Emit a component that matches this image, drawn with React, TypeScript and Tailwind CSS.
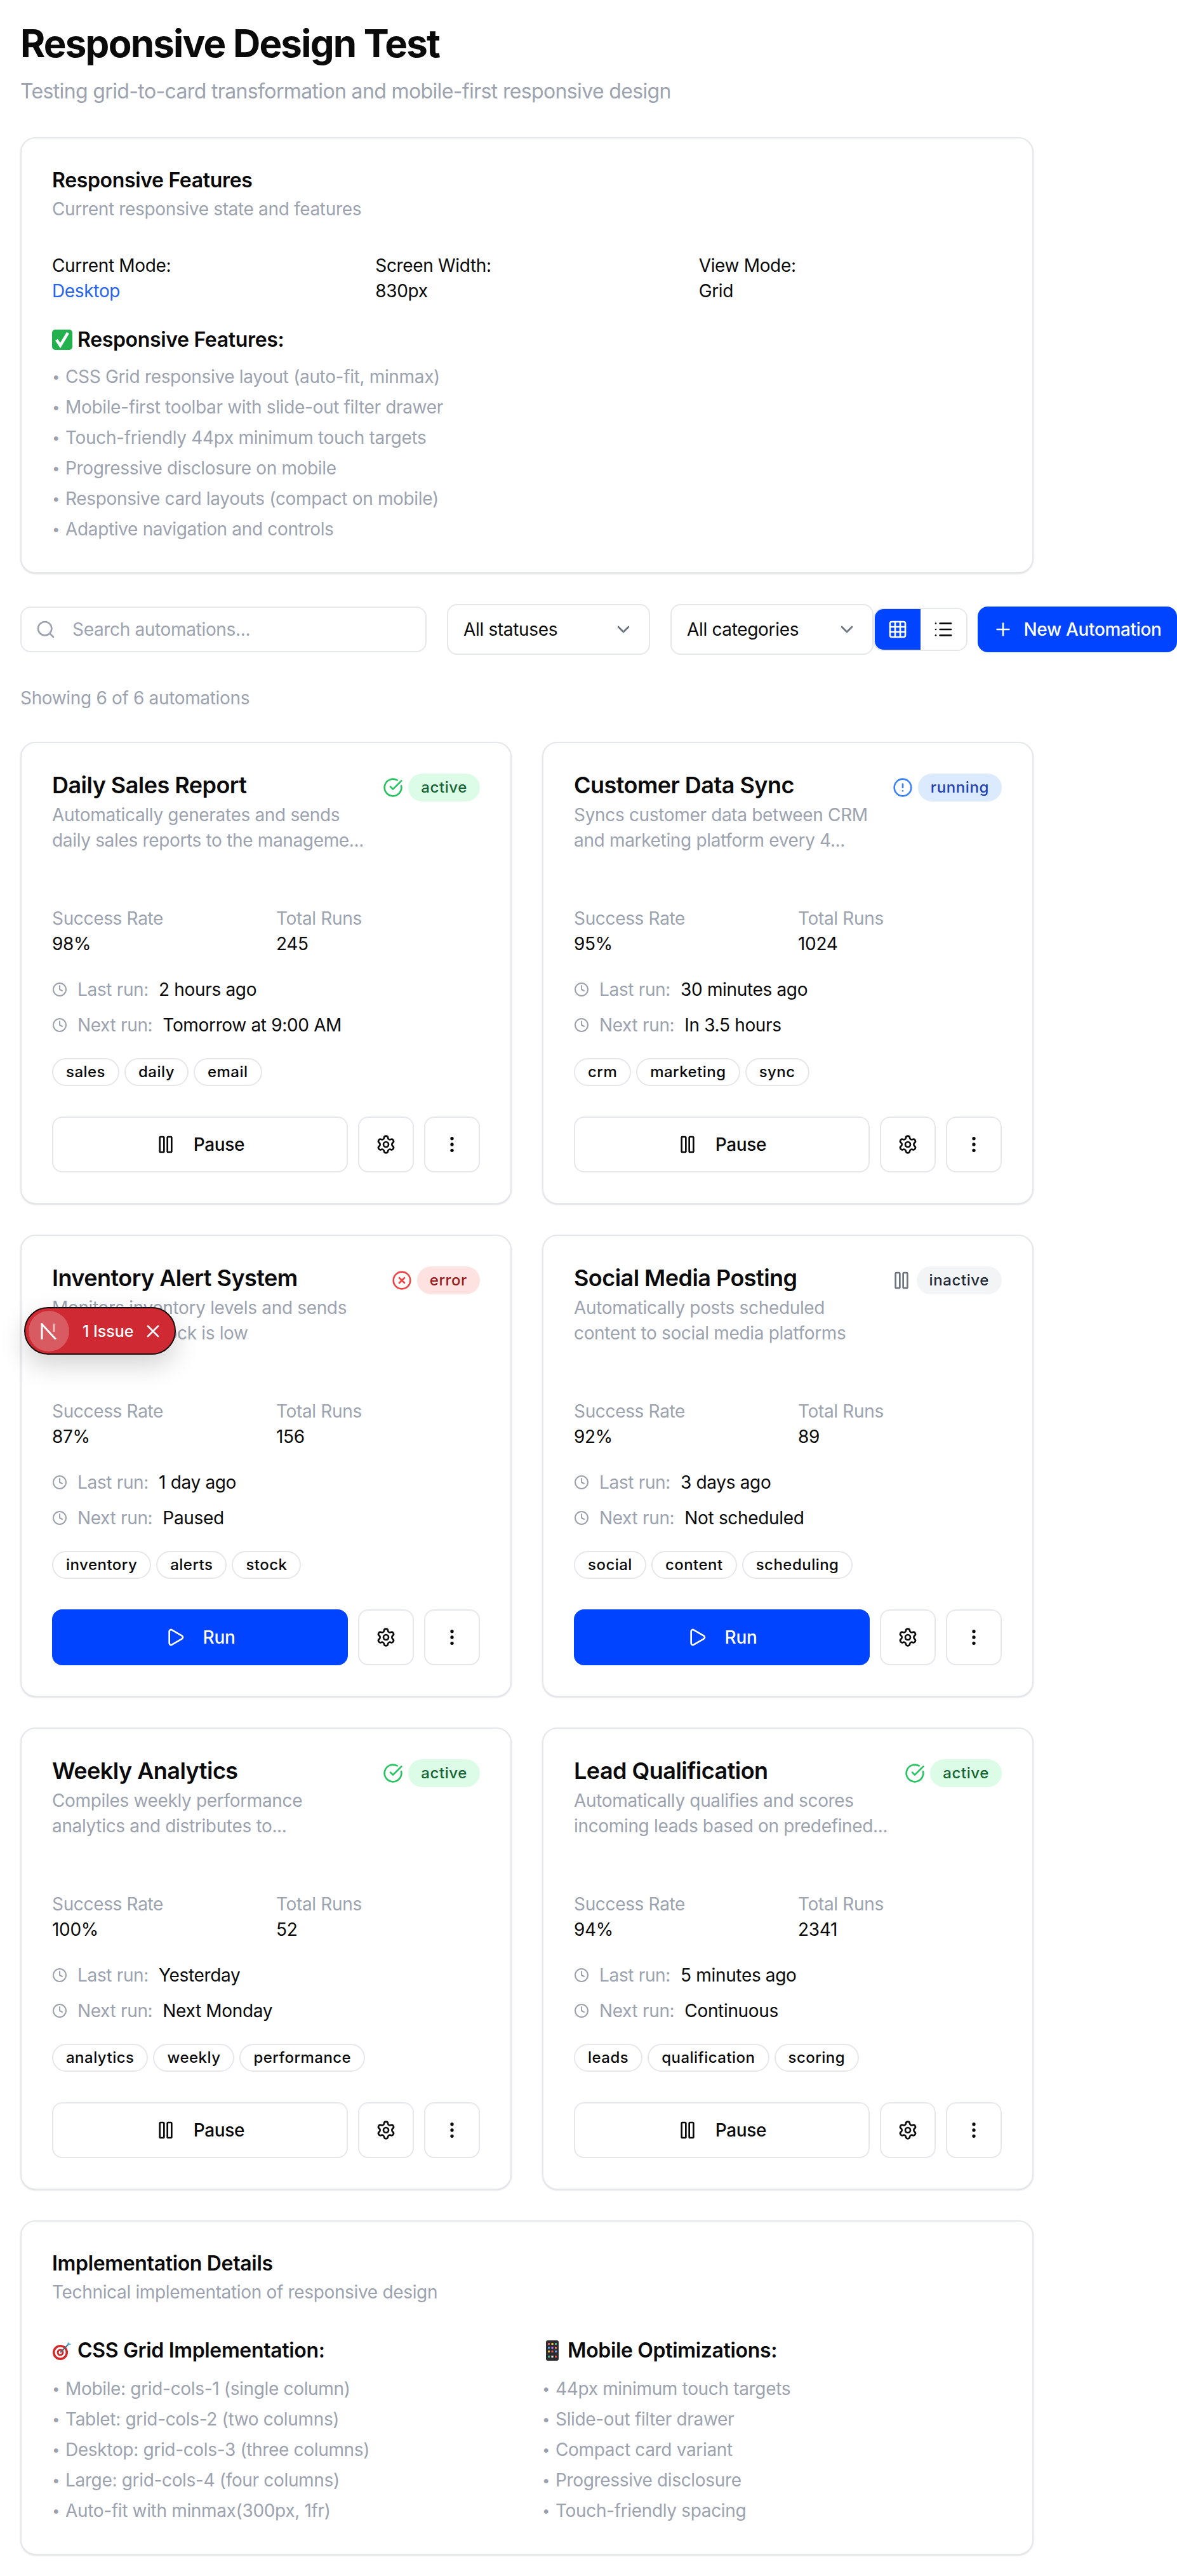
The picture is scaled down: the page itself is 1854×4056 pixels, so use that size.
import {
  ChevronDown,
  CircleAlert,
  CircleCheckBig,
  CircleX,
  Clock,
  EllipsisVertical,
  Grid3x3,
  List,
  Pause,
  Play,
  Plus,
  Search,
  Settings,
  X,
} from 'lucide-react'

const AUTOMATIONS = [
  { name: 'Daily Sales Report', lines: ['Automatically generates and sends', 'daily sales reports to the manageme...'], status: 'active', rate: '98%', runs: '245', last: '2 hours ago', next: 'Tomorrow at 9:00 AM', tags: ['sales', 'daily', 'email'] },
  { name: 'Customer Data Sync', lines: ['Syncs customer data between CRM', 'and marketing platform every 4...'], status: 'running', rate: '95%', runs: '1024', last: '30 minutes ago', next: 'In 3.5 hours', tags: ['crm', 'marketing', 'sync'] },
  { name: 'Inventory Alert System', lines: ['Monitors inventory levels and sends', 'alerts when stock is low'], status: 'error', rate: '87%', runs: '156', last: '1 day ago', next: 'Paused', tags: ['inventory', 'alerts', 'stock'] },
  { name: 'Social Media Posting', lines: ['Automatically posts scheduled', 'content to social media platforms'], status: 'inactive', rate: '92%', runs: '89', last: '3 days ago', next: 'Not scheduled', tags: ['social', 'content', 'scheduling'] },
  { name: 'Weekly Analytics', lines: ['Compiles weekly performance', 'analytics and distributes to...'], status: 'active', rate: '100%', runs: '52', last: 'Yesterday', next: 'Next Monday', tags: ['analytics', 'weekly', 'performance'] },
  { name: 'Lead Qualification', lines: ['Automatically qualifies and scores', 'incoming leads based on predefined...'], status: 'active', rate: '94%', runs: '2341', last: '5 minutes ago', next: 'Continuous', tags: ['leads', 'qualification', 'scoring'] },
]

const FEATURES = [
  'CSS Grid responsive layout (auto-fit, minmax)',
  'Mobile-first toolbar with slide-out filter drawer',
  'Touch-friendly 44px minimum touch targets',
  'Progressive disclosure on mobile',
  'Responsive card layouts (compact on mobile)',
  'Adaptive navigation and controls',
]

const GRID_NOTES = [
  'Mobile: grid-cols-1 (single column)',
  'Tablet: grid-cols-2 (two columns)',
  'Desktop: grid-cols-3 (three columns)',
  'Large: grid-cols-4 (four columns)',
  'Auto-fit with minmax(300px, 1fr)',
]

const MOBILE_NOTES = [
  '44px minimum touch targets',
  'Slide-out filter drawer',
  'Compact card variant',
  'Progressive disclosure',
  'Touch-friendly spacing',
]

function StatusIcon({ status }: { status: string }) {
  if (status === 'active') return <CircleCheckBig className="size-8 text-[#22c55e]" />
  if (status === 'running') return <CircleAlert className="size-8 text-[#3b82f6]" />
  if (status === 'error') return <CircleX className="size-8 text-[#ef4444]" />
  return <Pause className="size-8 text-[#6b7280]" />
}

function badgeClass(status: string) {
  if (status === 'active') return 'bg-[#dcfce7] text-[#166534]'
  if (status === 'running') return 'bg-[#dbeafe] text-[#1e40af]'
  if (status === 'error') return 'bg-[#fee2e2] text-[#991b1b]'
  return 'bg-[#f3f4f6] text-[#1f2937]'
}

function BulletList({ items }: { items: string[] }) {
  return (
    <ul className="flex flex-col gap-2 text-[28px] leading-[40px] text-[#9ca3af]">
      {items.map(item => (
        <li key={item} className="flex items-center">
          <span className="w-[21px] shrink-0 text-[22px]">•</span>
          {item}
        </li>
      ))}
    </ul>
  )
}

function AutomationCard({ item }: { item: (typeof AUTOMATIONS)[number] }) {
  const stopped = item.status === 'error' || item.status === 'inactive'
  return (
    <div className="rounded-[24px] border-2 border-[#e5e7eb] bg-white p-[48px] shadow-sm">
      <div className="flex items-start justify-between">
        <div>
          <h3 className="mb-[8px] text-[36px] leading-[37px] font-semibold tracking-[-0.015em] text-[#0a0a0a]">{item.name}</h3>
          <p className="text-[#9ca3af]">
            {item.lines[0]}
            <br />
            {item.lines[1]}
          </p>
        </div>
        <div className="flex items-center gap-2">
          <StatusIcon status={item.status} />
          <span className={`rounded-full px-[20px] py-[6px] text-[24px] leading-[32px] font-medium tracking-[0.025em] ${badgeClass(item.status)}`}>
            {item.status}
          </span>
        </div>
      </div>

      <div className="mt-[83px] grid grid-cols-2 gap-x-8">
        <div>
          <p className="text-[#9ca3af]">Success Rate</p>
          <p className="text-[#0a0a0a]">{item.rate}</p>
        </div>
        <div>
          <p className="text-[#9ca3af]">Total Runs</p>
          <p className="text-[#0a0a0a]">{item.runs}</p>
        </div>
      </div>

      <div className="mt-8 flex flex-col gap-4">
        <div className="flex items-center">
          <Clock className="mr-4 size-6 text-[#9ca3af]" />
          <span className="mr-4 text-[#9ca3af]">Last run:</span>
          <span className="text-[#0a0a0a]">{item.last}</span>
        </div>
        <div className="flex items-center">
          <Clock className="mr-4 size-6 text-[#9ca3af]" />
          <span className="mr-4 text-[#9ca3af]">Next run:</span>
          <span className="text-[#0a0a0a]">{item.next}</span>
        </div>
      </div>

      <div className="mt-8 flex gap-2">
        {item.tags.map(tag => (
          <span key={tag} className="rounded-full border-2 border-[#e5e7eb] px-[20px] py-[4px] text-[24px] leading-[32px] font-medium tracking-[0.02em] text-[#0a0a0a]">
            {tag}
          </span>
        ))}
      </div>

      <div className="mt-12 flex gap-4">
        {stopped ? (
          <button className="flex h-[88px] flex-1 items-center justify-center gap-7 rounded-[16px] bg-[#0044ff] font-medium text-white">
            <Play className="size-8" />
            Run
          </button>
        ) : (
          <button className="flex h-[88px] flex-1 items-center justify-center gap-7 rounded-[16px] border-2 border-[#e5e7eb] bg-white font-medium text-[#0a0a0a]">
            <Pause className="size-8" />
            Pause
          </button>
        )}
        <button className="flex size-[88px] items-center justify-center rounded-[16px] border-2 border-[#e5e7eb] bg-white text-[#0a0a0a]">
          <Settings className="size-8" />
        </button>
        <button className="flex size-[88px] items-center justify-center rounded-[16px] border-2 border-[#e5e7eb] bg-white text-[#0a0a0a]">
          <EllipsisVertical className="size-8" />
        </button>
      </div>
    </div>
  )
}

function CheckEmoji() {
  return (
    <svg viewBox="0 0 32 32" className="mr-[8px] size-[32px] shrink-0">
      <rect x="0" y="0" width="32" height="32" rx="5" fill="#22b14c" />
      <path d="M7 16l6 9L25 5" fill="none" stroke="#fff" strokeWidth="4.5" />
    </svg>
  )
}

function TargetEmoji() {
  return (
    <svg viewBox="0 0 32 32" className="mr-[8px] size-[32px] shrink-0">
      <circle cx="13" cy="19" r="12" fill="#d02a2a" />
      <circle cx="13" cy="19" r="8.5" fill="#fff" />
      <circle cx="13" cy="19" r="5.5" fill="#d02a2a" />
      <circle cx="13" cy="19" r="2.5" fill="#fff" />
      <path d="M13 19L27 5" stroke="#4b6b7a" strokeWidth="2" />
      <path d="M24 8l1-6 2 3 4 1z" fill="#4fb0d8" />
    </svg>
  )
}

function PhoneEmoji() {
  return (
    <svg viewBox="0 0 32 32" className="mr-[8px] size-[32px] shrink-0">
      <rect x="6" y="0" width="20" height="32" rx="3" fill="#2b2b30" />
      <rect x="9" y="4" width="3" height="3" fill="#e65a5a" />
      <rect x="14.5" y="4" width="3" height="3" fill="#f0c040" />
      <rect x="20" y="4" width="3" height="3" fill="#52b788" />
      <rect x="9" y="10" width="3" height="3" fill="#5aa7e6" />
      <rect x="14.5" y="10" width="3" height="3" fill="#c77dff" />
      <rect x="20" y="10" width="3" height="3" fill="#f08a5d" />
      <rect x="9" y="16" width="3" height="3" fill="#f0c040" />
      <rect x="14.5" y="16" width="3" height="3" fill="#e65a5a" />
      <rect x="20" y="16" width="3" height="3" fill="#5aa7e6" />
      <rect x="9" y="24" width="3" height="3" fill="#52b788" />
      <rect x="14.5" y="24" width="3" height="3" fill="#f5f5f5" />
      <rect x="20" y="24" width="3" height="3" fill="#e65a5a" />
    </svg>
  )
}

function SelectBox({ label }: { label: string }) {
  return (
    <div className="flex h-[80px] w-[320px] shrink-0 items-center justify-between rounded-[16px] border-2 border-[#e5e7eb] bg-white px-[24px] text-[#0a0a0a]">
      {label}
      <ChevronDown className="size-8 text-[#6b7280]" />
    </div>
  )
}

export default function App() {
  return (
    <div className="relative w-[1854px] bg-white p-[32px] font-['Inter',sans-serif] text-[28px] leading-[40px] tracking-[-0.012em]">
      <h1 className="text-[60px] leading-[72px] font-bold tracking-[-0.03em] text-[#0a0a0a]">Responsive Design Test</h1>
      <p className="mt-4 text-[32px] leading-[48px] tracking-[-0.02em] text-[#9ca3af]">
        Testing grid-to-card transformation and mobile-first responsive design
      </p>

      <div className="mt-12 w-[1596px] rounded-[24px] border-2 border-[#e5e7eb] bg-white p-[48px] shadow-sm">
        <h2 className="mb-[8px] text-[32px] leading-[35px] font-semibold text-[#0a0a0a]">Responsive Features</h2>
        <p className="text-[#9ca3af]">Current responsive state and features</p>
        <div className="mt-[49px] grid grid-cols-3 gap-8 text-[#0a0a0a]">
          <div>
            <p>Current Mode:</p>
            <p className="text-[#2563eb]">Desktop</p>
          </div>
          <div>
            <p>Screen Width:</p>
            <p>830px</p>
          </div>
          <div>
            <p>View Mode:</p>
            <p>Grid</p>
          </div>
        </div>
        <h4 className="mt-[33px] mb-[14px] flex items-center text-[32px] leading-[48px] font-semibold text-[#0a0a0a]">
          <CheckEmoji />
          Responsive Features:
        </h4>
        <BulletList items={FEATURES} />
      </div>

      <div className="mt-12 flex w-[1822px] items-center">
        <div className="relative h-[72px] w-[640px] shrink-0 rounded-[16px] border-2 border-[#e5e7eb] bg-white">
          <Search className="absolute top-[18px] left-[22px] size-8 text-[#9ca3af]" />
          <span className="absolute top-[14px] left-[80px] text-[#9ca3af]">Search automations...</span>
        </div>
        <div className="ml-8 flex gap-8">
          <SelectBox label="All statuses" />
          <SelectBox label="All categories" />
        </div>
        <div className="flex h-[68px] w-[148px] shrink-0 overflow-hidden rounded-[16px] border-2 border-[#e5e7eb]">
          <div className="flex w-[72px] items-center justify-center bg-[#0044ff] text-white">
            <Grid3x3 className="size-8" />
          </div>
          <div className="flex flex-1 items-center justify-center bg-white text-[#0a0a0a]">
            <List className="size-8" />
          </div>
        </div>
        <button className="ml-4 flex h-[72px] w-[314px] shrink-0 items-center justify-center gap-4 rounded-[16px] bg-[#0044ff] font-medium text-white">
          <Plus className="size-8" />
          New Automation
        </button>
      </div>

      <p className="mt-12 text-[#9ca3af]">Showing 6 of 6 automations</p>

      <div className="mt-[49px] grid w-[1596px] grid-cols-2 gap-12">
        {AUTOMATIONS.map(item => (
          <AutomationCard key={item.name} item={item} />
        ))}
      </div>

      <div className="mt-12 w-[1596px] rounded-[24px] border-2 border-[#e5e7eb] bg-white p-[48px] shadow-sm">
        <h2 className="mb-[8px] text-[32px] leading-[35px] font-semibold text-[#0a0a0a]">Implementation Details</h2>
        <p className="text-[#9ca3af]">Technical implementation of responsive design</p>
        <div className="mt-12 grid grid-cols-2 gap-12">
          <div>
            <h4 className="mb-4 flex items-center text-[32px] leading-[48px] font-semibold text-[#0a0a0a]">
              <TargetEmoji />
              CSS Grid Implementation:
            </h4>
            <BulletList items={GRID_NOTES} />
          </div>
          <div>
            <h4 className="mb-4 flex items-center text-[32px] leading-[48px] font-semibold text-[#0a0a0a]">
              <PhoneEmoji />
              Mobile Optimizations:
            </h4>
            <BulletList items={MOBILE_NOTES} />
          </div>
        </div>
      </div>

      {/* dev tools issue pill */}
      <div className="absolute top-[2058px] left-[38px] flex h-[75px] w-[239px] items-center rounded-full border-2 border-[#1a0a0a] bg-[#cf2a33] shadow-[0_16px_40px_rgba(0,0,0,0.18)]">
        <div className="ml-[5px] flex size-[64px] items-center justify-center rounded-full bg-[#d95b62]">
          <svg viewBox="0 0 26 26" className="size-[26px]" fill="none" stroke="#fff" strokeWidth="3">
            <path d="M2 26V2L24 26" />
            <path d="M21 1v13" stroke="#fff" strokeOpacity="0.6" />
          </svg>
        </div>
        <span className="ml-[21px] text-[25px] font-medium tracking-normal text-white">1 Issue</span>
        <X className="ml-[14px] size-8 text-white" />
      </div>
    </div>
  )
}
